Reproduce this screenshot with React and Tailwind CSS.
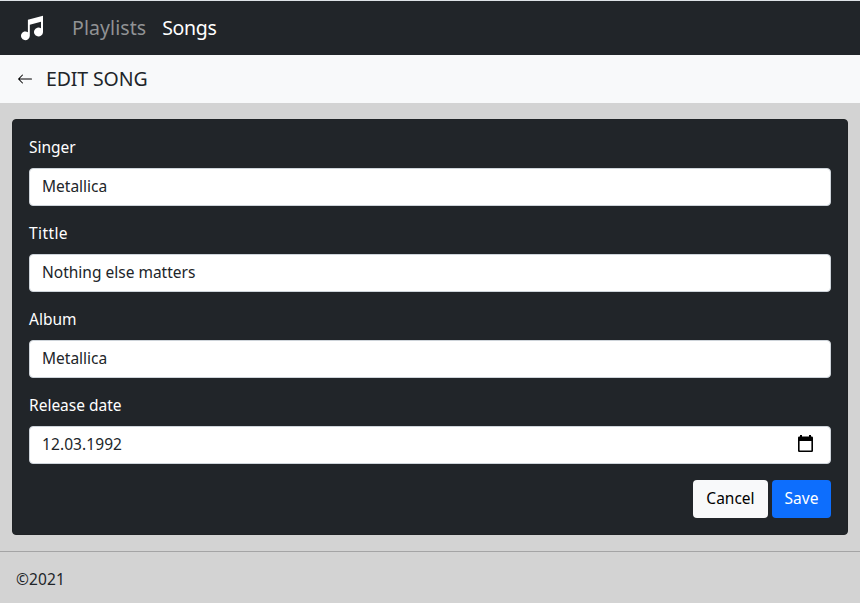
import { BsArrowLeft } from "react-icons/bs";

function MusicLogo() {
  return (
    <svg width="24" height="26" viewBox="0 0 24 26" fill="#fff" aria-hidden="true">
      <path d="M7.9 4.7 23 .8V17.2A4.5 4.5 0 1 1 21 13.2V6.8L9.8 9.7V21A4.4 4.4 0 1 1 7.9 17.2Z" />
    </svg>
  );
}

function CalendarIcon() {
  return (
    <svg className="mb-[3px]" width="15" height="17" viewBox="0 0 15 17" aria-hidden="true">
      <path
        fillRule="evenodd"
        d="M2 0H4V1.5H11V0H13V1.5H13.7Q15 1.5 15 2.8V15.7Q15 17 13.7 17H1.3Q0 17 0 15.7V2.8Q0 1.5 1.3 1.5H2ZM1.6 6V15.4H13.4V6Z"
      />
    </svg>
  );
}

function Field({ label, value, icon }) {
  return (
    <div className="mb-4">
      <div className="mb-[9px] h-[23px] leading-[22px] text-white">{label}</div>
      <div className="flex h-[38px] items-center justify-between rounded border border-[#ced4da] bg-white pr-[17px] pl-3">
        <span className="pb-0.5 leading-6">{value}</span>
        {icon}
      </div>
    </div>
  );
}

export default function App() {
  return (
    <div className="min-h-screen border-t border-[#dee2e6] bg-[#d3d3d3] font-['Noto_Sans','Open_Sans',sans-serif] text-[15.5px] text-[#212529]">
      <nav className="flex h-[54px] items-center bg-[#212529] pl-5 text-[19.5px]">
        <MusicLogo />
        <a className="ml-7 tracking-[0.08px] text-[#909294]">Playlists</a>
        <a className="ml-4 tracking-[-0.3px] text-white">Songs</a>
      </nav>
      <header className="flex h-12 items-center bg-[#f8f9fa] pl-[17px]">
        <BsArrowLeft size={16} color="#000" />
        <h1 className="ml-[13px] text-[19.5px] tracking-[-0.12px]">EDIT SONG</h1>
      </header>
      <main className="mx-3 mt-4 h-[416px] rounded border border-[#1f2225] bg-[#212529] p-4">
        <Field label="Singer" value="Metallica" />
        <Field label={<span className="tracking-[0.4px]">Tittle</span>} value="Nothing else matters" />
        <Field label="Album" value="Metallica" />
        <Field
          label="Release date"
          value={<span className="tracking-[0.08px]">12.03.1992</span>}
          icon={<CalendarIcon />}
        />
        <div className="flex justify-end gap-1">
          <button className="h-[38px] w-[75px] rounded bg-[#f8f9fa] text-black">Cancel</button>
          <button className="h-[38px] w-[59px] rounded bg-[#0d6efd] text-white">Save</button>
        </div>
      </main>
      <footer className="mt-4 border-t border-[#a4a4a5] px-4 pt-[15px] pb-4 leading-6 tracking-[0.1px]">©2021</footer>
    </div>
  );
}
